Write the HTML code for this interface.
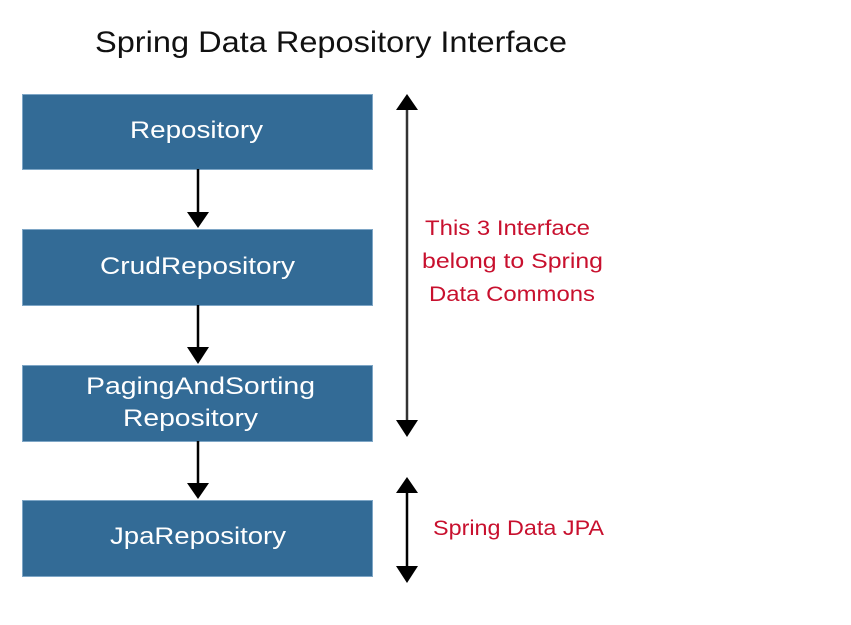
<!DOCTYPE html>
<html><head><meta charset="utf-8"><style>
html,body{margin:0;padding:0;background:#fff;width:851px;height:625px;overflow:hidden}
svg{display:block}
text{font-family:"Liberation Sans",sans-serif}
</style></head><body>
<svg width="851" height="625" viewBox="0 0 851 625" xmlns="http://www.w3.org/2000/svg">
<text x="95" y="52" font-size="30" fill="#111" textLength="472" lengthAdjust="spacingAndGlyphs">Spring Data Repository Interface</text>
<g fill="#336b96" stroke="#7ea6c6" stroke-width="1">
<rect x="22.5" y="94.5" width="350" height="75"/>
<rect x="22.5" y="229.5" width="350" height="76"/>
<rect x="22.5" y="365.5" width="350" height="76"/>
<rect x="22.5" y="500.5" width="350" height="76"/>
</g>
<g fill="#fff" font-size="24">
<text x="130" y="138" textLength="133" lengthAdjust="spacingAndGlyphs">Repository</text>
<text x="100" y="274" textLength="195" lengthAdjust="spacingAndGlyphs">CrudRepository</text>
<text x="86" y="394" textLength="229" lengthAdjust="spacingAndGlyphs">PagingAndSorting</text>
<text x="123" y="426" textLength="135" lengthAdjust="spacingAndGlyphs">Repository</text>
<text x="110" y="544" textLength="176" lengthAdjust="spacingAndGlyphs">JpaRepository</text>
</g>
<g stroke="#000" stroke-width="2.5">
<line x1="198" y1="169" x2="198" y2="215"/>
<line x1="198" y1="305" x2="198" y2="350"/>
<line x1="198" y1="441" x2="198" y2="487"/>
<line x1="407" y1="105" x2="407" y2="428" stroke="#333"/>
<line x1="407" y1="488" x2="407" y2="573"/>
</g>
<g fill="#000">
<path d="M187 212 L209 212 L198 228 Z"/>
<path d="M187 347 L209 347 L198 364 Z"/>
<path d="M187 483 L209 483 L198 499 Z"/>
<path d="M396 110 L418 110 L407 94 Z"/>
<path d="M396 420 L418 420 L407 437 Z"/>
<path d="M396 493 L418 493 L407 477 Z"/>
<path d="M396 566 L418 566 L407 583 Z"/>
</g>
<g fill="#c8102e" font-size="21">
<text x="425" y="235" textLength="165" lengthAdjust="spacingAndGlyphs">This 3 Interface</text>
<text x="422" y="268" textLength="181" lengthAdjust="spacingAndGlyphs">belong to Spring</text>
<text x="429" y="301" textLength="166" lengthAdjust="spacingAndGlyphs">Data Commons</text>
<text x="433" y="535" textLength="171" lengthAdjust="spacingAndGlyphs">Spring Data JPA</text>
</g>
</svg>
</body></html>
